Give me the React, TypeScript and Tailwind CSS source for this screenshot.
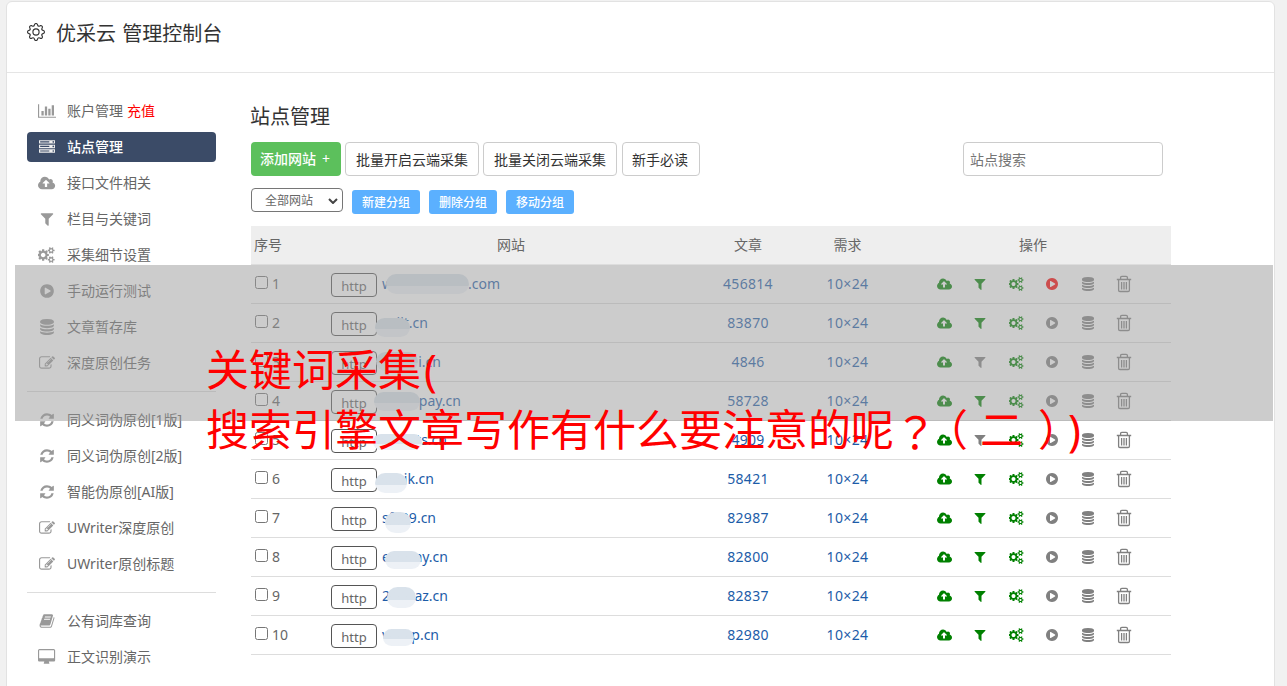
import React from 'react';
import { BsGear } from 'react-icons/bs';
import clsx from 'clsx';

const ICONS = {
  chart: {
    box: '0 0 2048 1792',
    d: 'M640 896v512h-256v-512h256zm384-512v1024h-256v-1024h256zm1024 1152v128h-2048v-1536h128v1408h1920zm-640-896v768h-256v-768h256zm384-384v1152h-256v-1152h256z',
  },
  server: {
    box: '0 0 1792 1792',
    d: 'M128 1408h1024v-128h-1024v128zm0-512h1024v-128h-1024v128zm1568 448q0-40-28-68t-68-28-68 28-28 68 28 68 68 28 68-28 28-68zm-1568-960h1024v-128h-1024v128zm1568 448q0-40-28-68t-68-28-68 28-28 68 28 68 68 28 68-28 28-68zm0-512q0-40-28-68t-68-28-68 28-28 68 28 68 68 28 68-28 28-68zm96 832v384h-1792v-384h1792zm0-512v384h-1792v-384h1792zm0-512v384h-1792v-384h1792z',
  },
  cloud: {
    box: '0 0 1920 1792',
    d: 'M1280 928q0-14-9-23l-352-352q-9-9-23-9t-23 9l-351 351q-10 12-10 24 0 14 9 23t23 9h224v352q0 13 9.5 22.5t22.5 9.5h192q13 0 22.5-9.5t9.5-22.5v-352h224q13 0 22.5-9.5t9.5-22.5zm640 288q0 159-112.5 271.5t-271.5 112.5h-1088q-185 0-316.5-131.5t-131.5-316.5q0-130 70-240t188-165q-2-30-2-43 0-212 150-362t362-150q156 0 285.5 87t188.5 231q71-62 166-62 106 0 181 75t75 181q0 76-41 138 130 31 213.5 135.5t83.5 238.5z',
  },
  filter: {
    box: '0 0 1792 1792',
    d: 'M1595 295q17 41-14 70l-493 493v742q0 42-39 59-13 5-25 5-27 0-45-19l-256-256q-19-19-19-45v-486l-493-493q-31-29-14-70 17-39 59-39h1280q42 0 59 39z',
  },
  cogs: {
    box: '0 0 1920 1792',
    d: 'M832 896q0-106-75-181t-181-75-181 75-75 181 75 181 181 75 181-75 75-181zm768 512q0-52-38-90t-90-38-90 38-38 90q0 53 37.5 90.5t90.5 37.5 90.5-37.5 37.5-90.5zm0-1024q0-52-38-90t-90-38-90 38-38 90q0 53 37.5 90.5t90.5 37.5 90.5-37.5 37.5-90.5zm-384 421v185q0 10-7 19.5t-16 10.5l-155 24q-11 35-32 76 34 48 90 115 7 11 7 20 0 12-7 19-23 30-82.5 89.5t-78.5 59.5q-11 0-21-7l-115-90q-37 19-77 31-11 108-23 155-7 24-30 24h-186q-11 0-20-7.5t-10-17.5l-23-153q-34-10-75-31l-118 89q-7 7-20 7-11 0-21-8-144-133-144-160 0-9 7-19 10-14 41-53t47-61q-23-44-35-82l-152-24q-10-1-17-9.5t-7-19.5v-185q0-10 7-19.5t16-10.5l155-24q11-35 32-76-34-48-90-115-7-11-7-20 0-12 7-20 22-30 82-89t79-59q11 0 21 7l115 90q34-18 77-32 11-108 23-154 7-24 30-24h186q11 0 20 7.5t10 17.5l23 153q34 10 75 31l118-89q8-7 20-7 11 0 21 8 144 133 144 160 0 8-7 19-12 16-42 54t-45 60q23 48 34 82l152 23q10 2 17 10.5t7 19.5zm640 533v140q0 16-149 31-12 27-30 52 51 113 51 138 0 4-4 7-122 71-124 71-8 0-46-47t-52-68q-20 2-30 2t-30-2q-14 21-52 68t-46 47q-2 0-124-71-4-3-4-7 0-25 51-138-18-25-30-52-149-15-149-31v-140q0-16 149-31 13-29 30-52-51-113-51-138 0-4 4-7 4-2 35-20t59-34 30-16q8 0 46 46.5t52 67.5q20-2 30-2t30 2q51-71 92-112l6-2q4 0 124 70 4 3 4 7 0 25-51 138 17 23 30 52 149 15 149 31zm0-1024v140q0 16-149 31-12 27-30 52 51 113 51 138 0 4-4 7-122 71-124 71-8 0-46-47t-52-68q-20 2-30 2t-30-2q-14 21-52 68t-46 47q-2 0-124-71-4-3-4-7 0-25 51-138-18-25-30-52-149-15-149-31v-140q0-16 149-31 13-29 30-52-51-113-51-138 0-4 4-7 4-2 35-20t59-34 30-16q8 0 46 46.5t52 67.5q20-2 30-2t30 2q51-71 92-112l6-2q4 0 124 70 4 3 4 7 0 25-51 138 17 23 30 52 149 15 149 31z',
  },
  play: {
    box: '0 0 1792 1792',
    d: 'M896 128q209 0 385.5 103t279.5 279.5 103 385.5-103 385.5-279.5 279.5-385.5 103-385.5-103-279.5-279.5-103-385.5 103-385.5 279.5-279.5 385.5-103zm384 823q32-18 32-55t-32-55l-544-320q-31-19-64-1-32 19-32 56v640q0 37 32 56 16 8 32 8 17 0 32-9z',
  },
  database: {
    box: '0 0 1792 1792',
    d: 'M896 768q237 0 443-43t325-127v170q0 69-103 128t-280 93.5-385 34.5-385-34.5-280-93.5-103-128v-170q119 84 325 127t443 43zm0 768q237 0 443-43t325-127v170q0 69-103 128t-280 93.5-385 34.5-385-34.5-280-93.5-103-128v-170q119 84 325 127t443 43zm0-384q237 0 443-43t325-127v170q0 69-103 128t-280 93.5-385 34.5-385-34.5-280-93.5-103-128v-170q119 84 325 127t443 43zm0-1152q208 0 385 34.5t280 93.5 103 128v128q0 69-103 128t-280 93.5-385 34.5-385-34.5-280-93.5-103-128v-128q0-69 103-128t280-93.5 385-34.5z',
  },
  edit: {
    box: '0 0 1792 1792',
    d: 'M888 1184l116-116-152-152-116 116v56h96v96h56zm440-720q-16-16-33 1l-350 350q-17 17-1 33t33-1l350-350q17-17 1-33zm80 594v190q0 119-84.5 203.5t-203.5 84.5h-832q-119 0-203.5-84.5t-84.5-203.5v-832q0-119 84.5-203.5t203.5-84.5h832q63 0 117 25 15 7 18 23 3 17-9 29l-49 49q-14 14-32 8-23-6-45-6h-832q-66 0-113 47t-47 113v832q0 66 47 113t113 47h832q66 0 113-47t47-113v-126q0-13 9-22l64-64q15-15 35-7t20 29zm-96-738l288 288-672 672h-288v-288zm444 132l-92 92-288-288 92-92q28-28 68-28t68 28l152 152q28 28 28 68t-28 68z',
  },
  refresh: {
    box: '0 0 1792 1792',
    d: 'M1639 1056q0 5-1 7-64 268-268 434.5t-478 166.5q-146 0-282.5-55t-243.5-157l-129 129q-19 19-45 19t-45-19-19-45v-448q0-26 19-45t45-19h448q26 0 45 19t19 45-19 45l-137 137q71 66 161 102t187 36q134 0 250-65t186-179q11-17 53-117 8-23 30-23h192q13 0 22.5 9.5t9.5 22.5zm25-800v448q0 26-19 45t-45 19h-448q-26 0-45-19t-19-45 19-45l138-138q-148-137-349-137-134 0-250 65t-186 179q-11 17-53 117-8 23-30 23h-199q-13 0-22.5-9.5t-9.5-22.5v-7q65-268 270-434.5t480-166.5q146 0 284 55.5t245 156.5l130-129q19-19 45-19t45 19 19 45z',
  },
  book: {
    box: '0 0 1792 1792',
    d: 'M1703 478q40 57 18 129l-275 906q-19 64-76.5 107.5t-122.5 43.5h-923q-77 0-148.5-53.5t-99.5-131.5q-24-67-2-127 0-4 3-27t4-37q1-8-3-21.5t-3-19.5q2-11 8-21t16.5-23.5 16.5-23.5q23-38 45-91.5t30-91.5q3-10 .5-30t-.5-28q3-11 17-28t17-23q21-36 42-92t25-90q1-9-2.5-32t.5-28q4-13 22-30.5t22-22.5q19-26 42.5-84.5t27.5-96.5q1-8-3-25.5t-2-26.5q2-8 9-18t18-23 17-21q8-12 16.5-30.5t15-35 16-36 19.5-32 26.5-23.5 36-11.5 47.5 5.5l-1 3q38-9 51-9h761q74 0 114 56t18 130l-274 906q-36 119-71.5 153.5t-128.5 34.5h-869q-27 0-38 15-11 16-1 43 24 70 144 70h923q29 0 56-15.5t35-41.5l300-987q7-22 5-57 38 15 59 43zm-1064 2q-4 13 2 22.5t20 9.5h608q13 0 25.5-9.5t16.5-22.5l21-64q4-13-2-22.5t-20-9.5h-608q-13 0-25.5 9.5t-16.5 22.5zm-83 256q-4 13 2 22.5t20 9.5h608q13 0 25.5-9.5t16.5-22.5l21-64q4-13-2-22.5t-20-9.5h-608q-13 0-25.5 9.5t-16.5 22.5z',
  },
  desktop: {
    box: '-64 0 1920 1792',
    d: 'M1728 992v-832q0-13-9.5-22.5t-22.5-9.5h-1600q-13 0-22.5 9.5t-9.5 22.5v832q0 13 9.5 22.5t22.5 9.5h1600q13 0 22.5-9.5t9.5-22.5zm128-832v1088q0 66-47 113t-113 47h-544q0 37 16 77.5t32 71 16 43.5q0 26-19 45t-45 19h-512q-26 0-45-19t-19-45q0-14 16-44t32-70 16-78h-544q-66 0-113-47t-47-113v-1088q0-66 47-113t113-47h1600q66 0 113 47t47 113z',
  },
};

type IconName = keyof typeof ICONS;

function Icon({ name, className }: { name: IconName; className?: string }) {
  const { box, d } = ICONS[name];
  return (
    <svg viewBox={box} fill="currentColor" className={clsx('w-auto shrink-0', className)}>
      <path d={d} />
    </svg>
  );
}

function TrashIcon() {
  return (
    <svg width="16" height="18" viewBox="0 0 16 18" fill="none" stroke="currentColor" strokeWidth="1.3">
      <path d="M.8 4.5h14.4M4.6 4.3V2.6q0-1.2 1.2-1.2h4.4q1.2 0 1.2 1.2v1.7M2.6 4.8v10.4q0 1.3 1.3 1.3h8.2q1.3 0 1.3-1.3V4.8M5.6 7v7.4M8 7v7.4M10.4 7v7.4" />
    </svg>
  );
}

type MenuItem = { icon: IconName; label: string; extra?: string; active?: boolean };

const menuGroups: MenuItem[][] = [
  [
    { icon: 'chart', label: '账户管理', extra: '充值' },
    { icon: 'server', label: '站点管理', active: true },
    { icon: 'cloud', label: '接口文件相关' },
    { icon: 'filter', label: '栏目与关键词' },
    { icon: 'cogs', label: '采集细节设置' },
    { icon: 'play', label: '手动运行测试' },
    { icon: 'database', label: '文章暂存库' },
    { icon: 'edit', label: '深度原创任务' },
  ],
  [
    { icon: 'refresh', label: '同义词伪原创[1版]' },
    { icon: 'refresh', label: '同义词伪原创[2版]' },
    { icon: 'refresh', label: '智能伪原创[AI版]' },
    { icon: 'edit', label: 'UWriter深度原创' },
    { icon: 'edit', label: 'UWriter原创标题' },
  ],
  [
    { icon: 'book', label: '公有词库查询' },
    { icon: 'desktop', label: '正文识别演示' },
  ],
];

type Site = {
  head: string;
  tail: string;
  width: number;
  // masked part of the domain, relative to the link: x, y, width, height
  mask: [number, number, number, number];
  articles: number;
  noFilter?: boolean;
  running?: boolean;
};

const sites: Site[] = [
  { head: 'w', tail: '.com', width: 118, mask: [4, 0, 83, 20], articles: 456814, running: true },
  { head: '', tail: 'iit.cn', width: 46, mask: [-7, 5, 35, 19], articles: 83870 },
  { head: '', tail: 'i.cn', width: 59, mask: [-6, 0, 42, 19], articles: 4846, noFilter: true },
  { head: '', tail: 'pay.cn', width: 79, mask: [-8, 1, 46, 19], articles: 58728 },
  { head: '', tail: 'ts.cn', width: 65, mask: [-9, 4, 49, 16], articles: 4909, noFilter: true },
  { head: '', tail: 'ik.cn', width: 52, mask: [-7, 4, 32, 20], articles: 58421 },
  { head: 'sf', tail: '39.cn', width: 54, mask: [3, 4, 26, 21], articles: 82987 },
  { head: 'e', tail: 'ay.cn', width: 66, mask: [3, 4, 36, 18], articles: 82800 },
  { head: '2', tail: 'az.cn', width: 66, mask: [5, 1, 29, 21], articles: 82837 },
  { head: 'v', tail: 'p.cn', width: 57, mask: [1, 4, 31, 17], articles: 82980 },
];

function Sidebar() {
  return (
    <nav className="w-[189px] shrink-0 pt-[23px]">
      {menuGroups.map((group, i) => (
        <div key={i}>
          {i > 0 && <hr className="my-[13px] border-[#ddd]" />}
          <ul className="flex flex-col gap-1.5">
            {group.map((item) => (
              <li
                key={item.label}
                className={clsx(
                  'flex h-[30px] items-center rounded text-sm',
                  item.active ? 'bg-[#3b4b67] font-medium text-white' : 'text-[#666]',
                )}
              >
                <span className={clsx('flex w-10 justify-center', item.active ? 'text-[#eee]' : 'text-[#999]')}>
                  <Icon name={item.icon} className="h-4" />
                </span>
                <span className="whitespace-nowrap">
                  {item.label}
                  {item.extra && <span className="ml-1 text-[#f00]">{item.extra}</span>}
                </span>
              </li>
            ))}
          </ul>
        </div>
      ))}
    </nav>
  );
}

function Toolbar() {
  const outline = 'h-[34px] rounded border border-[#ccc] bg-white pt-px text-center text-[#333]';
  const group = 'mt-0.5 h-6 w-[68px] rounded-[3px] bg-[#5bb0ff] pt-0.5 text-xs font-medium text-white';
  return (
    <>
      <div className="mt-[11px] flex text-sm">
        <button className="mr-1 h-[34px] w-[90px] rounded bg-[#5cc05c] pr-0.5 font-medium text-white">
          添加网站<span className="ml-1.5 font-normal">+</span>
        </button>
        <button className={clsx(outline, 'mr-1 w-[134px]')}>批量开启云端采集</button>
        <button className={clsx(outline, 'mr-[5px] w-[134px]')}>批量关闭云端采集</button>
        <button className={clsx(outline, 'w-[78px] pr-0.5')}>新手必读</button>
        <input
          placeholder="站点搜索"
          className="mr-2 ml-auto h-[34px] w-[200px] rounded border border-[#ccc] px-1.5 placeholder:text-[#757575]"
        />
      </div>
      <div className="mt-3 flex h-[38px] items-start gap-[9px]">
        <div className="flex h-6 w-[92px] items-center rounded-[4px] border border-[#767676] pt-px pr-1 pl-[13px] text-xs text-[#666]">
          全部网站
          <svg viewBox="0 0 10 6" className="ml-auto h-1.5 w-2.5" fill="none" stroke="#444" strokeWidth="2">
            <path d="M1 1l4 4 4-4" />
          </svg>
        </div>
        <button className={group}>新建分组</button>
        <button className={group}>删除分组</button>
        <button className={group}>移动分组</button>
      </div>
    </>
  );
}

function SiteRow({ site, no }: { site: Site; no: number }) {
  const [x, y, w, h] = site.mask;
  return (
    <div className="grid h-[39px] grid-cols-[75px_370px_104px_95px_276px] items-center border-b border-[#ddd]">
      <label className="flex items-center pl-1 text-[#666]">
        <input type="checkbox" className="mr-1 mb-[3px] size-[13px]" />
        {no}
      </label>
      <div className="flex items-center pl-[5px]">
        <span className="mt-0.5 h-6 w-[46px] rounded border border-[#555] text-center text-[13px] leading-[25px] text-[#666]">
          http
        </span>
        <a
          className="relative ml-[5px] flex h-5 items-center justify-between text-[#1c5ca8]"
          style={{ width: site.width }}
        >
          <span>{site.head}</span>
          <span>{site.tail}</span>
          <span
            className="absolute rounded-full bg-linear-to-b from-[#d9e2eb] from-60% to-[#edf1f6] to-60%"
            style={{ left: x, top: y, width: w, height: h }}
          />
        </a>
      </div>
      <span className="text-center tracking-[0.3px] text-[#1c5ca8]">{site.articles}</span>
      <span className="text-center tracking-[0.4px] text-[#1c5ca8]">10×24</span>
      <div className="grid grid-cols-[repeat(6,36px)] items-center justify-items-center pl-[31px] text-[#808080]">
        <Icon name="cloud" className="h-3.5 text-[#008000]" />
        <Icon name="filter" className={clsx('h-3.5', !site.noFilter && 'text-[#008000]')} />
        <Icon name="cogs" className="h-3.5 text-[#008000]" />
        <Icon name="play" className={clsx('h-3.5', site.running && 'text-[#f00]')} />
        <Icon name="database" className="h-3.5" />
        <span className="-ml-px">
          <TrashIcon />
        </span>
      </div>
    </div>
  );
}

export default function App() {
  return (
    <div className="relative h-[686px] w-[1287px] overflow-hidden bg-[#f1f1f1] pt-px pl-1.5 font-['Noto_Sans','Noto_Sans_CJK_SC',sans-serif]">
      <div className="h-[700px] w-[1269px] rounded-md border border-[#e2e2e2] bg-white">
        <header className="flex h-[71px] items-start border-b border-[#e5e5e5] pt-[17px] pl-5 text-[#333]">
          <BsGear className="mt-1 size-[18px]" />
          <h1 className="mt-px ml-[11px] text-xl leading-7 [word-spacing:1px]">优采云 管理控制台</h1>
        </header>
        <div className="flex pl-5">
          <Sidebar />
          <main className="ml-[35px] w-[920px]">
            <h2 className="mt-[30px] -ml-px text-xl leading-7 text-[#333]">站点管理</h2>
            <Toolbar />
            <div className="text-sm">
              <div className="grid h-[39px] grid-cols-[75px_370px_104px_95px_276px] items-center border-b border-[#ddd] bg-[#eee] text-center text-[#666]">
                <span className="pl-[3px] text-left">序号</span>
                <span>网站</span>
                <span>文章</span>
                <span>需求</span>
                <span>操作</span>
              </div>
              {sites.map((site, i) => (
                <SiteRow key={i} site={site} no={i + 1} />
              ))}
            </div>
          </main>
        </div>
      </div>
      {/* caption banner over the console */}
      <div className="absolute top-[265px] left-[15px] h-[156px] w-[1258px] bg-[#999]/50" />
      <div className="absolute top-[340px] left-[206px] text-[43px] leading-[60px] whitespace-nowrap text-[#f00] [text-spacing-trim:space-all]">
        <p>
          关键词采集<span className="ml-[3px]">(</span>
        </p>
        <p className="flex">
          <span>搜索引擎文章写作有什么要注意的呢</span>
          <span className="w-[43px] text-center font-['Noto_Sans_CJK_TC',sans-serif]">？</span>
          <span className="-ml-[12px] w-[55px]">（</span>
          <span className="w-[43px]">二</span>
          <span className="ml-[15px] w-[28px]">）</span>
          <span className="ml-0.5">)</span>
        </p>
      </div>
    </div>
  );
}
